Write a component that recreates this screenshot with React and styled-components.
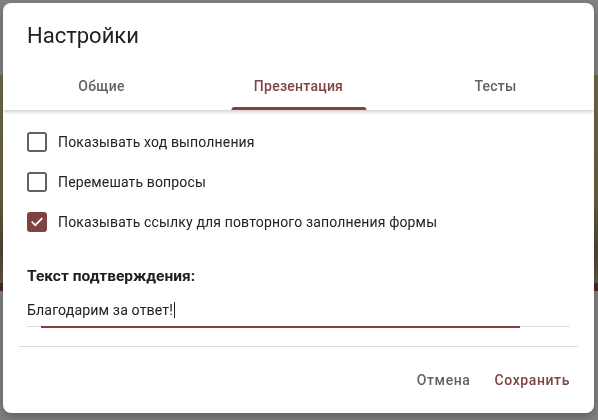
import React from "react";
import styled, { createGlobalStyle } from "styled-components";

const ACCENT = "#7c4340";

const Global = createGlobalStyle`
  html, body { margin: 0; padding: 0; }
  body {
    width: 598px;
    height: 420px;
    overflow: hidden;
    background: #7f7f7f;
    font-family: Roboto, "Noto Sans", Arial, sans-serif;
  }
`;

const Page = styled.div`
  width: 598px;
  height: 420px;
  display: flex;
  flex-direction: column;
  background: #7f7f7f;
`;

const PageTop = styled.div`
  height: 75px;
  background: #808080;
`;

const Banner = styled.div`
  height: 208px;
  background: linear-gradient(180deg, #6d6a49 0%, #66603f 60%, #4f4334 85%, #5f5a40 100%);
`;

const Stripe = styled.div`
  height: 8px;
  background: #4b2826;
`;

const PageRest = styled.div`
  flex: 1;
  background: #808080;
`;

const Dialog = styled.div`
  position: fixed;
  left: 3px;
  top: 3px;
  width: 591px;
  height: 410px;
  background: #fff;
  border-radius: 8px;
  box-shadow: 0 4px 8px rgba(0, 0, 0, 0.25);
  display: flex;
  flex-direction: column;
  overflow: hidden;
`;

const Header = styled.div`
  display: flex;
  flex-direction: column;
  box-shadow: 0 2px 3px rgba(0, 0, 0, 0.18);
  position: relative;
  z-index: 1;
`;

const Title = styled.h1`
  margin: 0;
  padding: 19px 24px 12px;
  font-size: 22px;
  line-height: 28px;
  font-weight: 400;
  color: #202124;
`;

const Tabs = styled.div`
  display: grid;
  grid-template-columns: repeat(3, 1fr);
`;

const Tab = styled.div`
  position: relative;
  height: 48px;
  display: flex;
  align-items: center;
  justify-content: center;
  font-size: 14px;
  font-weight: 500;
  letter-spacing: 0.25px;
  color: ${(p) => (p.$active ? ACCENT : "#5f6368")};
`;

const Indicator = styled.span`
  position: absolute;
  bottom: 0;
  left: 50%;
  transform: translateX(-50%);
  width: 135px;
  height: 3px;
  background: ${ACCENT};
  border-radius: 3px 3px 0 0;
`;

const Body = styled.div`
  flex: 1;
  display: flex;
  flex-direction: column;
  padding: 12px 24px 0;
`;

const OptionRow = styled.label`
  height: 40px;
  display: flex;
  align-items: center;
  gap: 11px;
  font-size: 14px;
  letter-spacing: 0.15px;
  color: #202124;
`;

const Box = styled.span`
  width: 20px;
  height: 20px;
  box-sizing: border-box;
  border-radius: 3px;
  border: 2px solid ${(p) => (p.$checked ? ACCENT : "#5f6368")};
  background: ${(p) => (p.$checked ? ACCENT : "transparent")};
  display: flex;
  align-items: center;
  justify-content: center;
  flex-shrink: 0;
`;

const SectionLabel = styled.div`
  margin-top: 24px;
  font-size: 15.5px;
  line-height: 20px;
  font-weight: 700;
  color: #202124;
`;

const Field = styled.div`
  position: relative;
  margin-top: 7px;
  height: 33px;
  border-bottom: 1px solid #dadce0;
  display: flex;
  align-items: center;
`;

const FieldText = styled.span`
  font-size: 14.2px;
  letter-spacing: 0.1px;
  color: #202124;
  display: flex;
  align-items: center;
`;

const Caret = styled.span`
  display: inline-block;
  width: 1px;
  height: 16px;
  background: #202124;
  margin-left: 1px;
`;

const FocusLine = styled.span`
  position: absolute;
  left: 14px;
  bottom: -2px;
  width: 479px;
  height: 2px;
  background: ${ACCENT};
`;

const Divider = styled.div`
  margin: 19px -8px 0;
  height: 1px;
  background: #dadce0;
`;

const Footer = styled.div`
  display: flex;
  justify-content: flex-end;
  gap: 8px;
  padding: 15px 16px 16px;
`;

const Button = styled.button`
  border: none;
  background: transparent;
  height: 36px;
  padding: 0 8px;
  font-family: inherit;
  font-size: 14px;
  font-weight: 500;
  letter-spacing: 0.6px;
  color: ${(p) => (p.$primary ? ACCENT : "#5f6368")};
  cursor: pointer;
`;

const Check = () => (
  <svg width="14" height="14" viewBox="0 0 24 24" fill="none">
    <path d="M4 12.5l5 5L20 6.5" stroke="#fff" strokeWidth="3" strokeLinecap="square" />
  </svg>
);

const options = [
  { label: "Показывать ход выполнения", checked: false },
  { label: "Перемешать вопросы", checked: false },
  { label: "Показывать ссылку для повторного заполнения формы", checked: true },
];

export default function App() {
  return (
    <>
      <Global />
      <Page>
        <PageTop />
        <Banner />
        <Stripe />
        <PageRest />
      </Page>
      <Dialog>
        <Header>
          <Title>Настройки</Title>
          <Tabs>
            <Tab>Общие</Tab>
            <Tab $active>
              Презентация
              <Indicator />
            </Tab>
            <Tab>Тесты</Tab>
          </Tabs>
        </Header>
        <Body>
          {options.map((o) => (
            <OptionRow key={o.label}>
              <Box $checked={o.checked}>{o.checked && <Check />}</Box>
              {o.label}
            </OptionRow>
          ))}
          <SectionLabel>Текст подтверждения:</SectionLabel>
          <Field>
            <FieldText>
              Благодарим за ответ!
              <Caret />
            </FieldText>
            <FocusLine />
          </Field>
          <Divider />
        </Body>
        <Footer>
          <Button>Отмена</Button>
          <Button $primary>Сохранить</Button>
        </Footer>
      </Dialog>
    </>
  );
}
